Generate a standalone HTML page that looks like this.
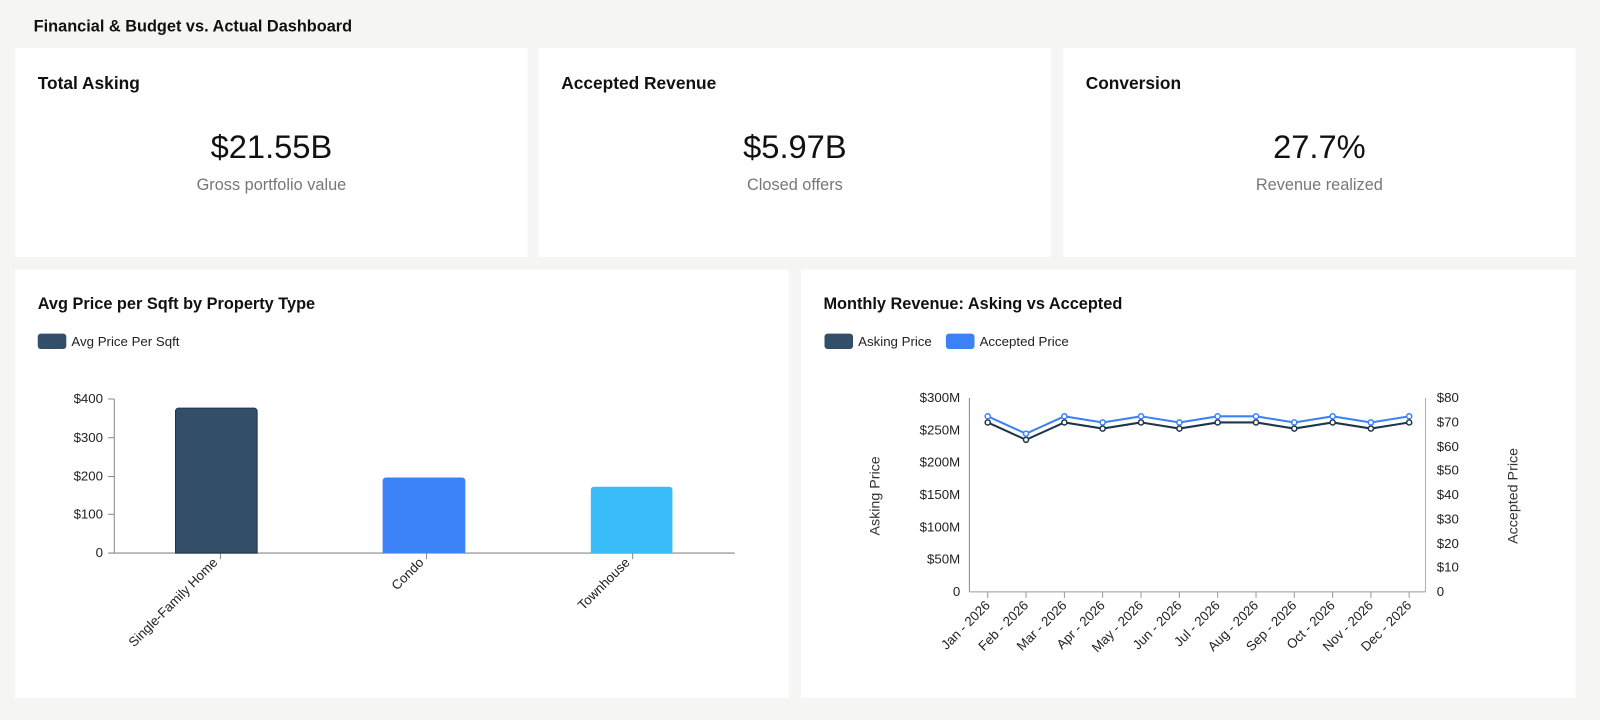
<!DOCTYPE html>
<html><head><meta charset="utf-8"><style>
html,body{margin:0;padding:0;background:#f5f5f3;width:1600px;height:720px;overflow:hidden}
svg{display:block;font-family:"Liberation Sans",Arial,sans-serif}
</style></head><body>
<svg width="1600" height="720" viewBox="0 0 1600 720">
<rect width="1600" height="720" fill="#f5f5f3"/>
<g transform="scale(1.0204)">
<text x="33" y="31" font-size="16" font-weight="bold" fill="#111">Financial &amp; Budget vs. Actual Dashboard</text>
<rect x="15" y="47" width="502" height="205" fill="#fff"/>
<rect x="528" y="47" width="502" height="205" fill="#fff"/>
<rect x="1042" y="47" width="502" height="205" fill="#fff"/>
<rect x="15" y="264" width="758" height="420" fill="#fff"/>
<rect x="785" y="264" width="759" height="420" fill="#fff"/>

<g font-size="17" font-weight="bold" fill="#111">
<text x="37" y="87">Total Asking</text>
<text x="550" y="87">Accepted Revenue</text>
<text x="1064" y="87">Conversion</text>
</g>
<g font-size="32" fill="#111" text-anchor="middle">
<text x="266" y="155">$21.55B</text>
<text x="779" y="155">$5.97B</text>
<text x="1293" y="155">27.7%</text>
</g>
<g font-size="16" fill="#777" text-anchor="middle">
<text x="266" y="186">Gross portfolio value</text>
<text x="779" y="186">Closed offers</text>
<text x="1293" y="186">Revenue realized</text>
</g>

<text x="37" y="303" font-size="16" font-weight="bold" fill="#111">Avg Price per Sqft by Property Type</text>
<rect x="37" y="327" width="28" height="15" rx="3" fill="#334e68"/>
<text x="70" y="339" font-size="13" fill="#222">Avg Price Per Sqft</text>
<g font-size="13" fill="#222" text-anchor="end">
<text x="101" y="546">0</text>
<text x="101" y="508">$100</text>
<text x="101" y="471">$200</text>
<text x="101" y="433">$300</text>
<text x="101" y="395">$400</text>
</g>
<g stroke="#888" stroke-width="1">
<line x1="112" y1="391" x2="112" y2="542"/>
<line x1="106" y1="391" x2="112" y2="391"/>
<line x1="106" y1="429" x2="112" y2="429"/>
<line x1="106" y1="467" x2="112" y2="467"/>
<line x1="106" y1="504" x2="112" y2="504"/>
<line x1="106" y1="542" x2="720" y2="542"/>
<line x1="216" y1="542" x2="216" y2="548"/>
<line x1="418" y1="542" x2="418" y2="548"/>
<line x1="620" y1="542" x2="620" y2="548"/>
</g>
<path d="M172 542V403a3 3 0 0 1 3-3h74a3 3 0 0 1 3 3V542Z" fill="#334e68" stroke="#1f3549"/>
<path d="M375 542V471a3 3 0 0 1 3-3h75a3 3 0 0 1 3 3V542Z" fill="#3b82f6"/>
<path d="M579 542V480a3 3 0 0 1 3-3h74a3 3 0 0 1 3 3V542Z" fill="#38bdf8"/>
<g font-size="13" fill="#222" text-anchor="end">
<text transform="translate(214,552) rotate(-45)">Single-Family Home</text>
<text transform="translate(416,552) rotate(-45)">Condo</text>
<text transform="translate(618,552) rotate(-45)">Townhouse</text>
</g>

<text x="807" y="303" font-size="16" font-weight="bold" fill="#111">Monthly Revenue: Asking vs Accepted</text>
<rect x="808" y="327" width="28" height="15" rx="3" fill="#334e68"/>
<text x="841" y="339" font-size="13" fill="#222">Asking Price</text>
<rect x="927" y="327" width="28" height="15" rx="3" fill="#3b82f6"/>
<text x="960" y="339" font-size="13" fill="#222">Accepted Price</text>
<g font-size="13" fill="#222" text-anchor="end">
<text x="941" y="584">0</text>
<text x="941" y="552">$50M</text>
<text x="941" y="521">$100M</text>
<text x="941" y="489">$150M</text>
<text x="941" y="457">$200M</text>
<text x="941" y="426">$250M</text>
<text x="941" y="394">$300M</text>
</g>
<g font-size="13" fill="#222">
<text x="1408" y="584">0</text>
<text x="1408" y="560">$10</text>
<text x="1408" y="537">$20</text>
<text x="1408" y="513">$30</text>
<text x="1408" y="489">$40</text>
<text x="1408" y="465">$50</text>
<text x="1408" y="442">$60</text>
<text x="1408" y="418">$70</text>
<text x="1408" y="394">$80</text>
</g>
<text transform="translate(862,486) rotate(-90)" font-size="14" fill="#333" text-anchor="middle">Asking Price</text>
<text transform="translate(1487,486) rotate(-90)" font-size="14" fill="#333" text-anchor="middle">Accepted Price</text>
<line x1="950" y1="390" x2="950" y2="580" stroke="#888"/>
<line x1="950" y1="580" x2="1397" y2="580" stroke="#999"/>
<line x1="1397" y1="390" x2="1397" y2="580" stroke="#8fb3f5"/>
<g stroke="#999">
<line x1="968" y1="580" x2="968" y2="586"/><line x1="1005.5" y1="580" x2="1005.5" y2="586"/><line x1="1043.1" y1="580" x2="1043.1" y2="586"/><line x1="1080.6" y1="580" x2="1080.6" y2="586"/><line x1="1118.2" y1="580" x2="1118.2" y2="586"/><line x1="1155.8" y1="580" x2="1155.8" y2="586"/><line x1="1193.3" y1="580" x2="1193.3" y2="586"/><line x1="1230.9" y1="580" x2="1230.9" y2="586"/><line x1="1268.4" y1="580" x2="1268.4" y2="586"/><line x1="1306" y1="580" x2="1306" y2="586"/><line x1="1343.5" y1="580" x2="1343.5" y2="586"/><line x1="1381" y1="580" x2="1381" y2="586"/>
</g>
<polyline fill="none" stroke="#1f3549" stroke-width="2" points="968,414 1005.5,431 1043.1,414 1080.6,420 1118.2,414 1155.8,420 1193.3,414 1230.9,414 1268.4,420 1306,414 1343.5,420 1381,414"/>
<polyline fill="none" stroke="#3b82f6" stroke-width="2" points="968,408 1005.5,425 1043.1,408 1080.6,414 1118.2,408 1155.8,414 1193.3,408 1230.9,408 1268.4,414 1306,408 1343.5,414 1381,408"/>
<g fill="#fff" stroke="#1f3549" stroke-width="1.5">
<circle cx="968" cy="414" r="2.5"/><circle cx="1005.5" cy="431" r="2.5"/><circle cx="1043.1" cy="414" r="2.5"/><circle cx="1080.6" cy="420" r="2.5"/><circle cx="1118.2" cy="414" r="2.5"/><circle cx="1155.8" cy="420" r="2.5"/><circle cx="1193.3" cy="414" r="2.5"/><circle cx="1230.9" cy="414" r="2.5"/><circle cx="1268.4" cy="420" r="2.5"/><circle cx="1306" cy="414" r="2.5"/><circle cx="1343.5" cy="420" r="2.5"/><circle cx="1381" cy="414" r="2.5"/>
</g>
<g fill="#fff" stroke="#3b82f6" stroke-width="1.5">
<circle cx="968" cy="408" r="2.5"/><circle cx="1005.5" cy="425" r="2.5"/><circle cx="1043.1" cy="408" r="2.5"/><circle cx="1080.6" cy="414" r="2.5"/><circle cx="1118.2" cy="408" r="2.5"/><circle cx="1155.8" cy="414" r="2.5"/><circle cx="1193.3" cy="408" r="2.5"/><circle cx="1230.9" cy="408" r="2.5"/><circle cx="1268.4" cy="414" r="2.5"/><circle cx="1306" cy="408" r="2.5"/><circle cx="1343.5" cy="414" r="2.5"/><circle cx="1381" cy="408" r="2.5"/>
</g>
<g font-size="13" fill="#222" text-anchor="end">
<text transform="translate(971,594) rotate(-45)">Jan - 2026</text>
<text transform="translate(1008.5,594) rotate(-45)">Feb - 2026</text>
<text transform="translate(1046.1,594) rotate(-45)">Mar - 2026</text>
<text transform="translate(1083.6,594) rotate(-45)">Apr - 2026</text>
<text transform="translate(1121.2,594) rotate(-45)">May - 2026</text>
<text transform="translate(1158.8,594) rotate(-45)">Jun - 2026</text>
<text transform="translate(1196.3,594) rotate(-45)">Jul - 2026</text>
<text transform="translate(1233.9,594) rotate(-45)">Aug - 2026</text>
<text transform="translate(1271.4,594) rotate(-45)">Sep - 2026</text>
<text transform="translate(1309,594) rotate(-45)">Oct - 2026</text>
<text transform="translate(1346.5,594) rotate(-45)">Nov - 2026</text>
<text transform="translate(1384,594) rotate(-45)">Dec - 2026</text>
</g>
</g>
</svg>
</body></html>
